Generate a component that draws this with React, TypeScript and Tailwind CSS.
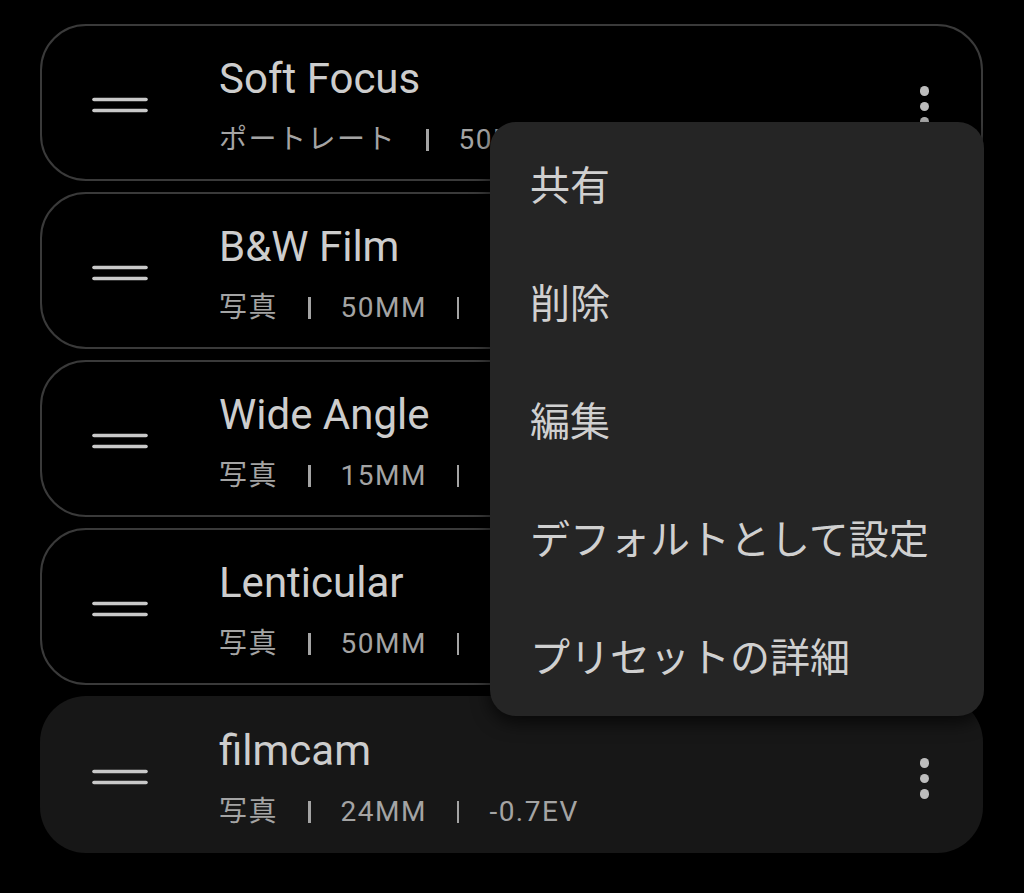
import React from "react";

type Preset = { title: string; type: string; lens: string; ev: string; active?: boolean };

const presets: Preset[] = [
  { title: "Soft Focus", type: "ポートレート", lens: "50MM", ev: "+0.3EV" },
  { title: "B&W Film", type: "写真", lens: "50MM", ev: "0.0EV" },
  { title: "Wide Angle", type: "写真", lens: "15MM", ev: "0.0EV" },
  { title: "Lenticular", type: "写真", lens: "50MM", ev: "0.0EV" },
  { title: "filmcam", type: "写真", lens: "24MM", ev: "-0.7EV", active: true },
];

function Handle() {
  return (
    <svg width="56" height="20" viewBox="0 0 56 20" className="shrink-0">
      <line x1="2" y1="4.5" x2="54" y2="4.5" stroke="#c9c9c9" strokeWidth="3.6" strokeLinecap="round" />
      <line x1="2" y1="15.5" x2="54" y2="15.5" stroke="#c9c9c9" strokeWidth="3.6" strokeLinecap="round" />
    </svg>
  );
}

function Dots() {
  return (
    <div className="flex flex-col items-center gap-[6px]">
      <span className="block w-[9.5px] h-[9.5px] rounded-full bg-[#bdbdbd]" />
      <span className="block w-[9.5px] h-[9.5px] rounded-full bg-[#bdbdbd]" />
      <span className="block w-[9.5px] h-[9.5px] rounded-full bg-[#bdbdbd]" />
    </div>
  );
}

function Card({ p }: { p: Preset }) {
  return (
    <div
      className={
        p.active
          ? "relative h-[157px] rounded-[46px] bg-[#171717] flex items-start"
          : "relative h-[157px] rounded-[46px] border-2 border-[#3a3a3a] bg-black flex items-start"
      }
    >
      <div className={p.active ? "pl-[52px] pt-[71px]" : "pl-[50px] pt-[69px]"}>
        <Handle />
      </div>
      <div className={p.active ? "ml-[71px] pt-[30px] flex flex-col" : "ml-[71px] pt-[28px] flex flex-col"}>
        <div
          className="text-[42px] leading-[50px] text-[#cdcdcd] whitespace-nowrap"
          style={{ fontFamily: 'Roboto, "Noto Sans CJK JP", sans-serif' }}
        >
          {p.title}
        </div>
        <div
          className="mt-[19px] flex items-center text-[28px] leading-[34px] tracking-[1.5px] text-[#a4a4a4] whitespace-nowrap"
          style={{ fontFamily: 'Roboto, "Noto Sans CJK JP", sans-serif' }}
        >
          <span>{p.type}</span>
          <span className="mx-[30px] block w-[2.5px] h-[22px] bg-[#a4a4a4]" />
          <span>{p.lens}</span>
          <span className="mx-[30px] block w-[2.5px] h-[22px] bg-[#a4a4a4]" />
          <span>{p.ev}</span>
        </div>
      </div>
      <div className={p.active ? "absolute right-[54px] top-[62px]" : "absolute right-[52px] top-[60px]"}>
        <Dots />
      </div>
    </div>
  );
}

const menuItems = ["共有", "削除", "編集", "デフォルトとして設定", "プリセットの詳細"];

export default function App() {
  return (
    <div className="relative w-[1024px] h-[893px] bg-black overflow-hidden">
      <div className="pt-[24px] pl-[40px] pr-[41px] flex flex-col gap-[11px]">
        {presets.map((p) => (
          <Card key={p.title} p={p} />
        ))}
      </div>
      <div
        className="absolute left-[490px] top-[122px] w-[494px] rounded-[26px] bg-[#252525] py-[2px] shadow-[0_6px_18px_rgba(0,0,0,0.7)]"
        style={{ fontFamily: '"Noto Sans CJK JP", sans-serif' }}
      >
        {menuItems.map((m) => (
          <div key={m} className="h-[118px] flex items-center pl-[40px] text-[40px] text-[#d0d0d0] whitespace-nowrap">
            {m}
          </div>
        ))}
      </div>
    </div>
  );
}
